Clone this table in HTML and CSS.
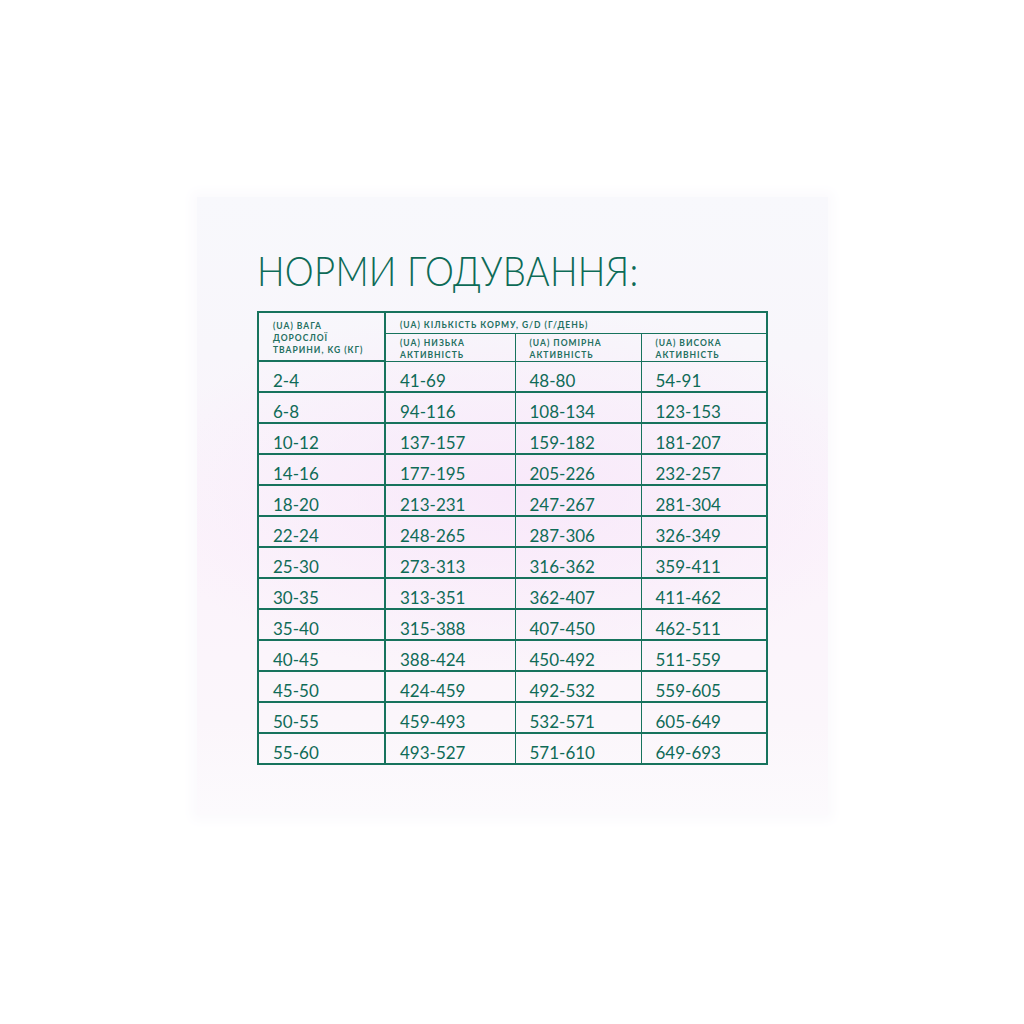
FILE: index.html
```html
<!DOCTYPE html>
<html lang="uk">
<head>
<meta charset="utf-8">
<link rel="stylesheet" href="styles.css">
</head>
<body>
<div class="page">
  <div class="panel">
    <h1 class="title">НОРМИ ГОДУВАННЯ:</h1>
    <table class="feed">
      <colgroup>
        <col class="c1"><col class="c2"><col class="c3"><col class="c4">
      </colgroup>
      <thead>
        <tr class="h1">
          <th rowspan="2" class="weight">(UA) ВАГА<br>ДОРОСЛОЇ<br>ТВАРИНИ, KG (КГ)</th>
          <th colspan="3" class="amount">(UA) КІЛЬКІСТЬ КОРМУ, G/D (Г/ДЕНЬ)</th>
        </tr>
        <tr class="h2">
          <th>(UA) НИЗЬКА<br>АКТИВНІСТЬ</th>
          <th>(UA) ПОМІРНА<br>АКТИВНІСТЬ</th>
          <th>(UA) ВИСОКА<br>АКТИВНІСТЬ</th>
        </tr>
      </thead>
      <tbody>
        <tr><td>2-4</td><td>41-69</td><td>48-80</td><td>54-91</td></tr>
        <tr><td>6-8</td><td>94-116</td><td>108-134</td><td>123-153</td></tr>
        <tr><td>10-12</td><td>137-157</td><td>159-182</td><td>181-207</td></tr>
        <tr><td>14-16</td><td>177-195</td><td>205-226</td><td>232-257</td></tr>
        <tr><td>18-20</td><td>213-231</td><td>247-267</td><td>281-304</td></tr>
        <tr><td>22-24</td><td>248-265</td><td>287-306</td><td>326-349</td></tr>
        <tr><td>25-30</td><td>273-313</td><td>316-362</td><td>359-411</td></tr>
        <tr><td>30-35</td><td>313-351</td><td>362-407</td><td>411-462</td></tr>
        <tr><td>35-40</td><td>315-388</td><td>407-450</td><td>462-511</td></tr>
        <tr><td>40-45</td><td>388-424</td><td>450-492</td><td>511-559</td></tr>
        <tr><td>45-50</td><td>424-459</td><td>492-532</td><td>559-605</td></tr>
        <tr><td>50-55</td><td>459-493</td><td>532-571</td><td>605-649</td></tr>
        <tr><td>55-60</td><td>493-527</td><td>571-610</td><td>649-693</td></tr>
      </tbody>
    </table>
  </div>
</div>
</body>
</html>
```

FILE: styles.css
```css
html, body {
  margin: 0;
  padding: 0;
  background: #ffffff;
}
.page {
  width: 1024px;
  height: 1024px;
  padding: 197px 0 0 197px;
  box-sizing: border-box;
}
.panel {
  width: 631px;
  height: 618px;
  box-sizing: border-box;
  padding: 50px 0 0 60px;
  background:
    radial-gradient(ellipse 60% 30% at 50% 48%, rgba(248, 232, 250, 0.95), rgba(248, 232, 250, 0) 100%),
    linear-gradient(180deg, #f8f8fc 0%, #f8f6fb 25%, #fbf3fb 55%, #fbf6fb 85%, #fcfafd 100%);
  box-shadow: 0 0 12px 6px #fbfafd;
  color: #0f6b57;
  font-family: "Lato", "Noto Sans", sans-serif;
}
.title {
  margin: 0;
  font-family: "Lato", "Noto Sans", sans-serif;
  font-weight: 300;
  font-size: 42px;
  line-height: 46px;
  letter-spacing: 0.3px;
  color: #0d6b57;
  height: 64px;
  white-space: nowrap;
  transform: scaleX(0.87);
  transform-origin: left center;
}
.feed {
  border-collapse: collapse;
  width: 509px;
  table-layout: fixed;
  border: 2px solid #17735d;
}
.c1 { width: 127px; }
.c2 { width: 130px; }
.c3 { width: 126px; }
.c4 { width: 126px; }
.feed th {
  font-family: "Lato", "Noto Sans", sans-serif;
  font-weight: 700;
  font-size: 8.5px;
  line-height: 12px;
  letter-spacing: 1px;
  text-align: left;
  vertical-align: top;
  color: #236f5f;
  border: 1.5px solid #17735d;
  padding: 0 0 0 14px;
}
.feed th.weight {
  border: 2px solid #17735d;
  padding-top: 7px;
}
.feed tr.h1 th.amount {
  height: 21px;
  padding-top: 6px;
  box-sizing: border-box;
}
.feed tr.h2 th {
  height: 26px;
  padding-top: 3px;
  box-sizing: border-box;
}
.feed td {
  height: 30.8px;
  box-sizing: border-box;
  padding: 9px 0 0 14px;
  font-size: 17px;
  line-height: 20px;
  color: #0f6b57;
  border: 1.5px solid #17735d;
  vertical-align: top;
}
.feed td:first-child {
  border-right-width: 2px;
}
.feed tbody tr {
  border-bottom: 2px solid #17735d;
}
```
